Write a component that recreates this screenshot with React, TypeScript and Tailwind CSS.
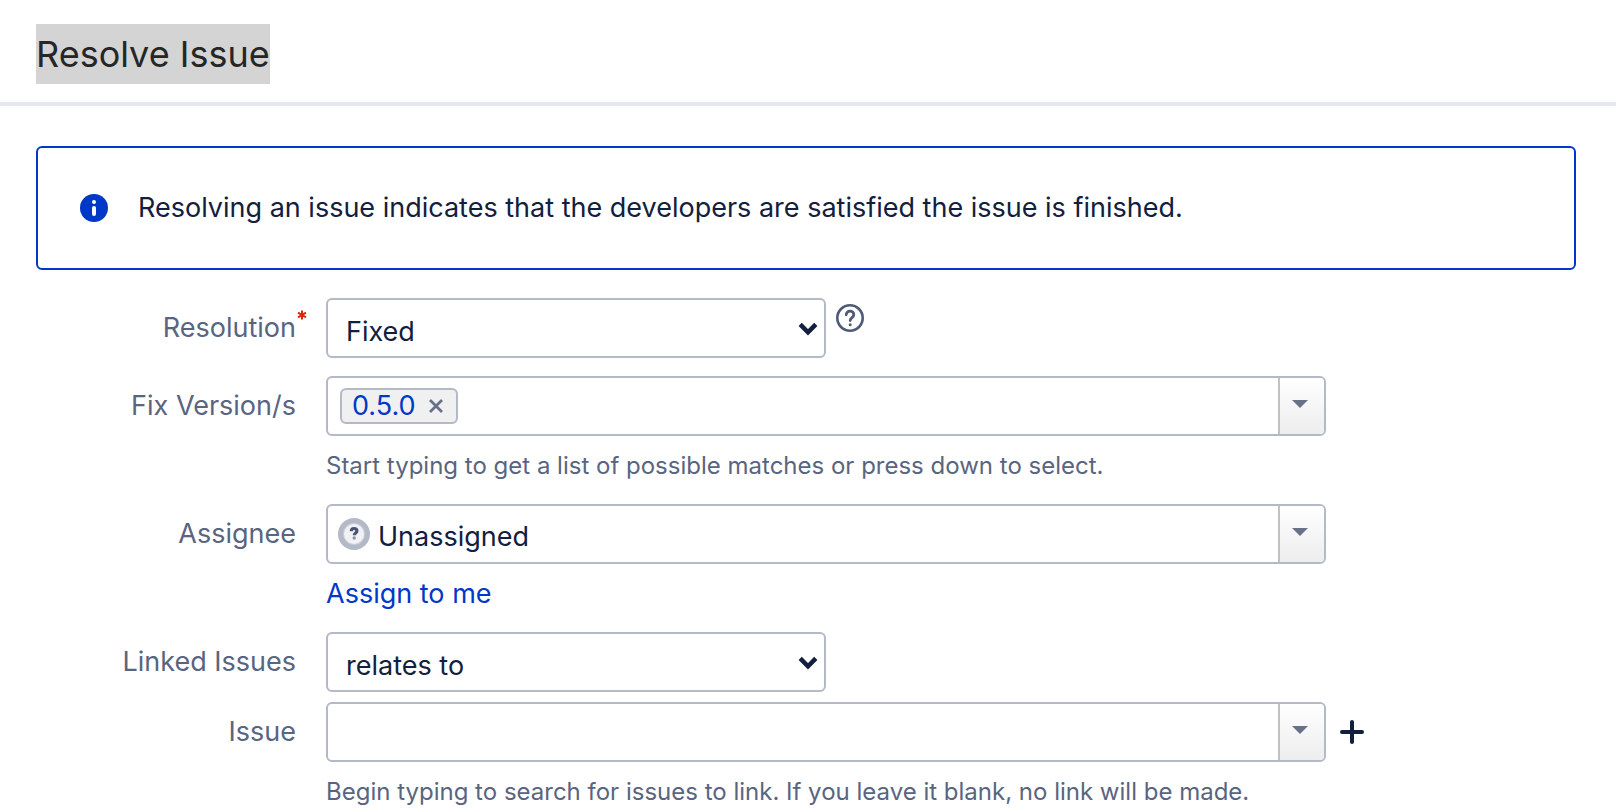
import React, { useState } from "react";

type RowProps = {
  label: string;
  htmlFor: string;
  required?: boolean;
  children: React.ReactNode;
};

function Row({ label, htmlFor, required, children }: RowProps) {
  return (
    <div className="grid grid-cols-[260px_minmax(0,1fr)] gap-x-[30px]">
      <label htmlFor={htmlFor} className="relative h-[60px] pt-3 text-right text-[27px] leading-9 text-[#596580]">
        {label}
        {required && (
          <svg viewBox="0 0 10 10" aria-label="required" className="absolute top-3 left-full ml-px size-[10px] stroke-[#de250b]">
            <path d="M5 .5v9M1 2.7l8 4.6M9 2.7L1 7.3" strokeWidth="2" fill="none" />
          </svg>
        )}
      </label>
      <div className="min-w-0">{children}</div>
    </div>
  );
}

function NativeSelect({ id, options }: { id: string; options: string[] }) {
  return (
    <div className="relative w-full max-w-[500px]">
      <select
        id={id}
        className="block h-[60px] w-full appearance-none rounded-md border-2 border-[#b3b9c6] bg-white pt-2 pl-[18px] pr-12 text-[27px] leading-9 text-[#12203e]"
      >
        {options.map((o) => (
          <option key={o}>{o}</option>
        ))}
      </select>
      <svg viewBox="0 0 20 14" className="pointer-events-none absolute top-6 right-2 h-[14px] w-5">
        <path d="M2.200 2.400L10 10.400l7.800-8" fill="none" stroke="#12203e" strokeWidth="4.500" />
      </svg>
    </div>
  );
}

function Combo({ label, children }: { label: string; children: React.ReactNode }) {
  return (
    <div className="flex h-[60px] w-full max-w-[1000px] overflow-hidden rounded-md border-2 border-[#b3b9c6] bg-white">
      <div className="flex min-w-0 flex-1 items-center">{children}</div>
      <button
        type="button"
        aria-label={label}
        className="flex w-[46px] items-center justify-center border-l-2 border-[#c1c1c1] bg-linear-to-b from-white to-[#ededed] pr-1 pb-1"
      >
        <svg viewBox="0 0 16 8" className="h-2 w-4 fill-[#67718a]">
          <path d="M0 0h16L8 8z" />
        </svg>
      </button>
    </div>
  );
}

export default function App() {
  const [version, setVersion] = useState(true);
  const [assignee, setAssignee] = useState("Unassigned");
  return (
    <div className="min-h-screen bg-white font-['Inter','Liberation_Sans',sans-serif]">
      <header className="border-b-4 border-[#e6e7ed] px-9 pt-6 pb-[18px]">
        <h1 className="w-fit bg-[#d4d4d4] text-4xl leading-[60px] text-[#262626]">Resolve Issue</h1>
      </header>
      <main className="px-10 pt-10 pl-9">
        <div className="flex min-h-[124px] items-center gap-[30px] rounded-md border-2 border-[#0038c7] px-[42px]">
          <svg viewBox="0 0 28 28" className="size-7 shrink-0">
            <circle cx="14" cy="14" r="14" fill="#0038c7" />
            <circle cx="14" cy="8" r="2" fill="#fff" />
            <path d="M14 14v6" stroke="#fff" strokeWidth="4" strokeLinecap="round" />
          </svg>
          <p className="text-[27px] leading-9 text-[#12203e]">
            Resolving an issue indicates that the developers are satisfied the issue is finished.
          </p>
        </div>
        <form className="pt-7">
          <Row label="Resolution" htmlFor="resolution" required>
            <div className="flex items-start gap-[10px]">
              <NativeSelect id="resolution" options={["Fixed", "Won't Fix", "Duplicate"]} />
              <button type="button" aria-label="Help" className="mt-1.5 shrink-0">
                <svg viewBox="0 0 28 28" className="size-7" fill="none" stroke="#4f5b76">
                  <circle cx="14" cy="14" r="12.700" strokeWidth="2.600" />
                  <path d="M10.200 10.800c0-2.200 1.700-3.600 3.800-3.600s3.800 1.400 3.800 3.500c0 2.900-3.600 3-3.600 5.800" strokeWidth="2.800" strokeLinecap="round" />
                  <circle cx="14.200" cy="20.700" r="1.500" fill="#4f5b76" stroke="none" />
                </svg>
              </button>
            </div>
          </Row>
          <div className="pt-[18px]">
            <Row label="Fix Version/s" htmlFor="versions">
              <Combo label="Show versions">
                {version && (
                  <span className="ml-3 flex h-9 items-center gap-3 rounded-md border-2 border-[#b3b9c6] bg-[#f0f0f0] pr-3 pl-[10px] text-[27px] leading-8 text-[#0038c7]">
                    0.5.0
                    <button type="button" aria-label="Remove 0.5.0" onClick={() => setVersion(false)}>
                      <svg viewBox="0 0 16 16" className="size-4 stroke-[#67718a]" fill="none">
                        <path d="M2 2l12 12M14 2L2 14" strokeWidth="2.800" />
                      </svg>
                    </button>
                  </span>
                )}
                <input id="versions" className="h-full min-w-0 flex-1 px-3 text-[27px] outline-none" />
              </Combo>
              <p className="pt-3 text-2xl leading-9 text-[#596580]">
                Start typing to get a list of possible matches or press down to select.
              </p>
            </Row>
          </div>
          <div className="pt-5">
            <Row label="Assignee" htmlFor="assignee">
              <Combo label="Show assignees">
                <svg viewBox="0 0 32 32" className="ml-[10px] size-8 shrink-0">
                  <circle cx="16" cy="16" r="16" fill="#b3b9c6" />
                  <circle cx="16" cy="16" r="11" fill="#c9cdd7" />
                  <circle cx="16" cy="16" r="10" fill="#f1f2f5" />
                  <path d="M13.300 13.200c0-1.800 1.200-2.700 2.700-2.700s2.900.9 2.900 2.500c0 2-2.600 2-2.600 4.200" fill="none" stroke="#4a5570" strokeWidth="3.200" />
                  <circle cx="16.200" cy="20" r="1.700" fill="#8a93a6" />
                </svg>
                <input
                  id="assignee"
                  value={assignee}
                  onChange={(e) => setAssignee(e.target.value)}
                  className="h-full min-w-0 flex-1 pt-1 pl-2 text-[27px] text-[#12203e] outline-none"
                />
              </Combo>
              <a href="#" className="mt-3 block w-fit text-[27px] leading-9 text-[#0038c7]">
                Assign to me
              </a>
            </Row>
          </div>
          <div className="pt-5">
            <Row label="Linked Issues" htmlFor="linked">
              <NativeSelect id="linked" options={["relates to", "blocks", "duplicates"]} />
            </Row>
          </div>
          <div className="pt-[10px]">
            <Row label="Issue" htmlFor="issue">
              <div className="flex items-center gap-[14px]">
                <Combo label="Show issues">
                  <input id="issue" className="h-full min-w-0 flex-1 px-3 text-[27px] outline-none" />
                </Combo>
                <button type="button" aria-label="Add issue" className="shrink-0">
                  <svg viewBox="0 0 24 24" className="size-6" fill="none" stroke="#12203e">
                    <path d="M12 2v20M2 12h20" strokeWidth="4" strokeLinecap="round" />
                  </svg>
                </button>
              </div>
              <p className="pt-3 text-2xl leading-9 text-[#596580]">
                Begin typing to search for issues to link. If you leave it blank, no link will be made.
              </p>
            </Row>
          </div>
        </form>
      </main>
    </div>
  );
}
